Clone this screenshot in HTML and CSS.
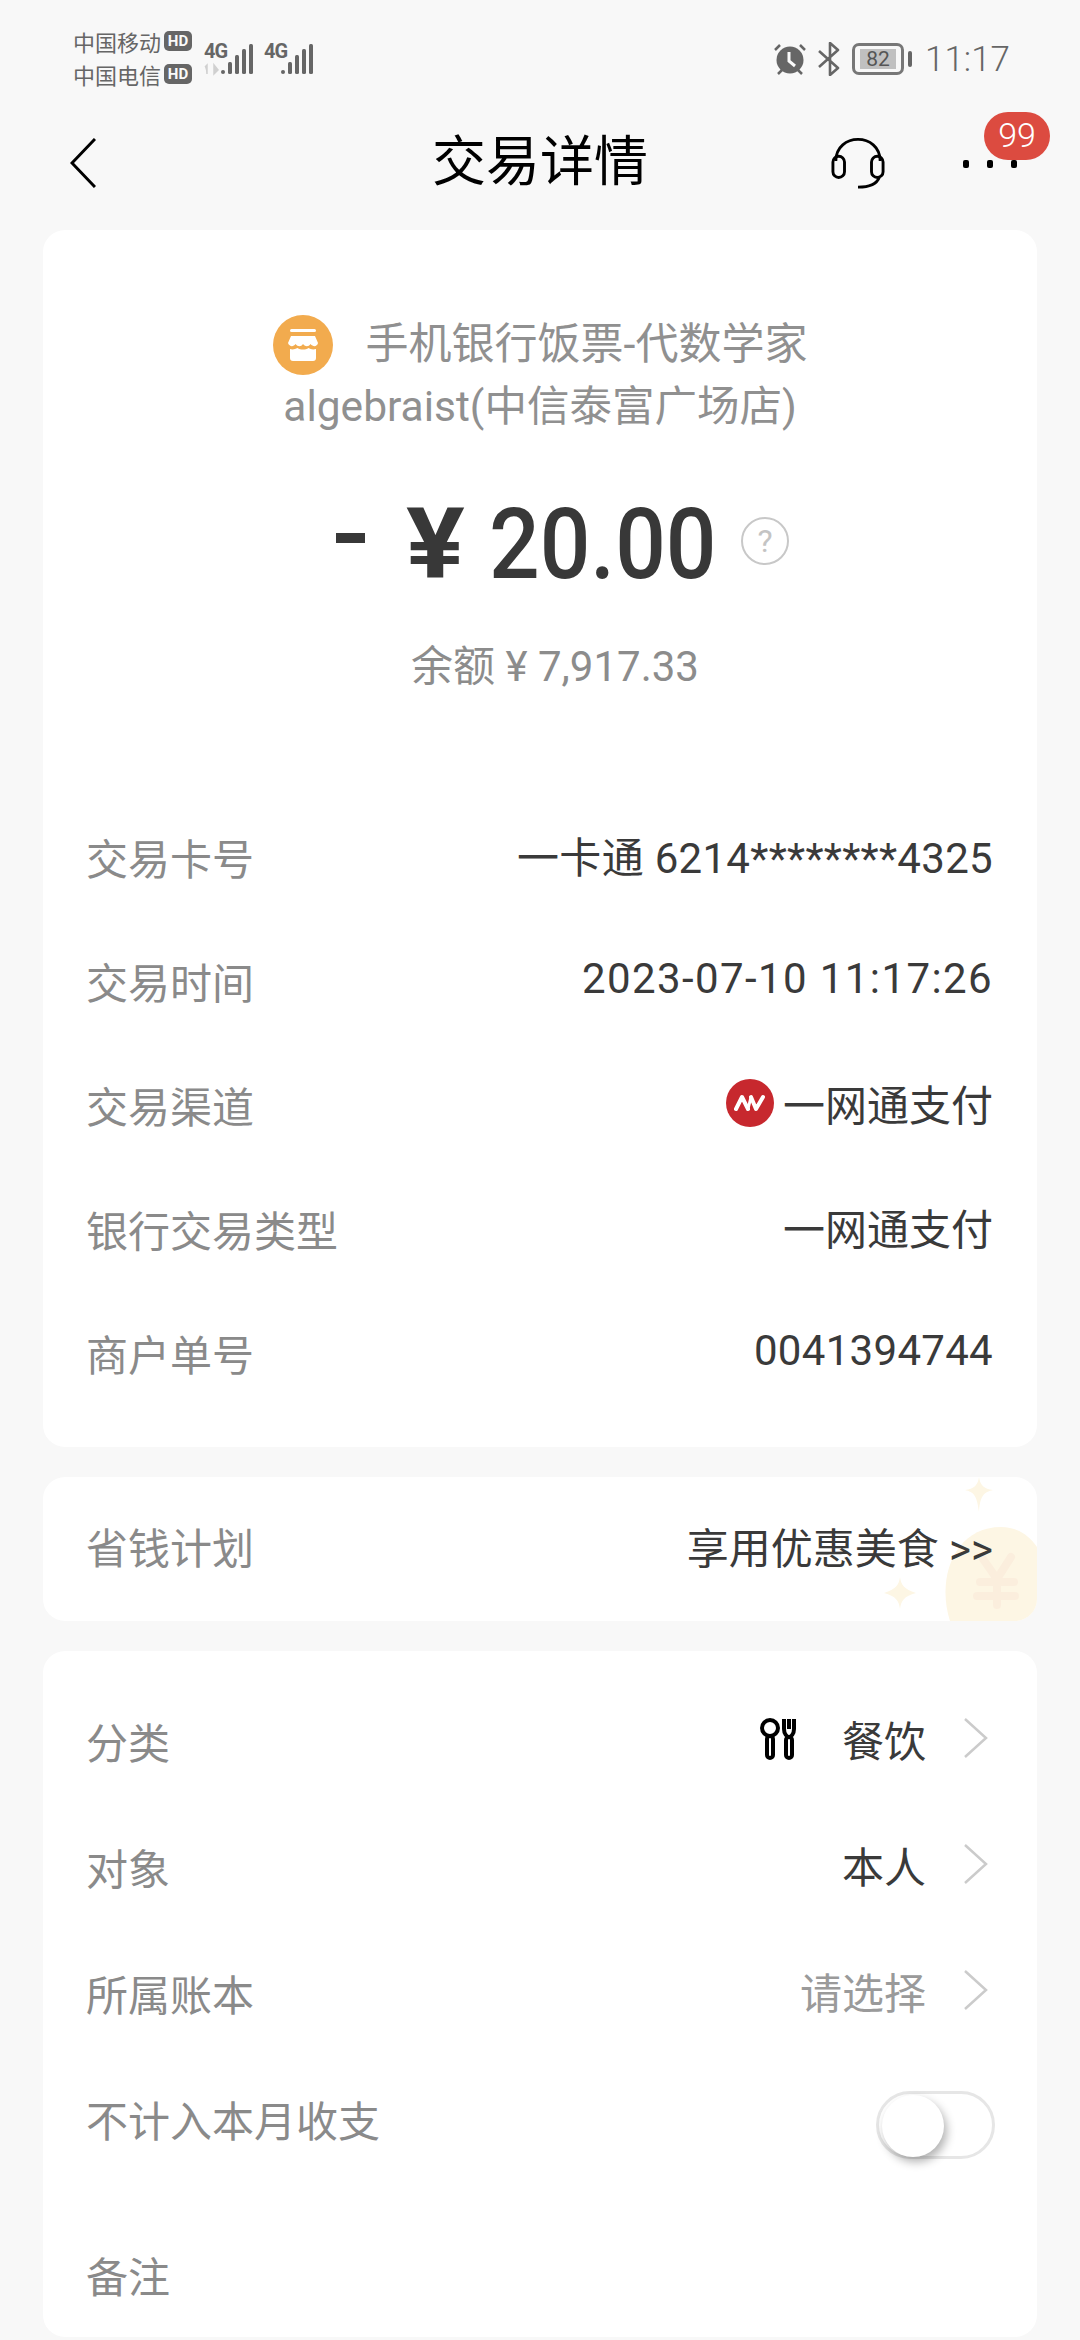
FILE: index.html
```html
<!DOCTYPE html>
<html lang="zh-CN">
<head>
  <meta charset="UTF-8">
  <meta name="viewport" content="width=device-width, initial-scale=1.0">
  <title>交易详情</title>
  <link rel="stylesheet" href="styles.css">
</head>
<body>
  <!-- Status bar -->
  <div class="status-bar">
    <div class="carriers">
      <div class="carrier">中国移动<span class="hd">HD</span></div>
      <div class="carrier">中国电信<span class="hd">HD</span></div>
    </div>
    <svg class="signal" width="110" height="44" viewBox="0 -10 110 44">
      <text class="net" x="0" y="15">4G</text>
      <path d="M3 22v9M1 24l2-2v9M10 22l4 5-4 4z" fill="#d0d0d0" stroke="#d0d0d0" stroke-width="1.5"/>
      <g fill="#666">
        <rect x="17" y="27" width="4" height="4" rx="2"/>
        <rect x="24" y="19" width="4" height="12" rx="1.5"/>
        <rect x="31" y="12" width="4" height="19" rx="1.5"/>
        <rect x="38" y="6" width="4" height="25" rx="1.5"/>
        <rect x="45" y="1" width="4" height="30" rx="1.5"/>
      </g>
      <text class="net" x="60" y="15">4G</text>
      <g fill="#666">
        <rect x="77" y="27" width="4" height="4" rx="2"/>
        <rect x="84" y="19" width="4" height="12" rx="1.5"/>
        <rect x="91" y="12" width="4" height="19" rx="1.5"/>
        <rect x="98" y="6" width="4" height="25" rx="1.5"/>
        <rect x="105" y="1" width="4" height="30" rx="1.5"/>
      </g>
    </svg>
    <div class="status-right">
      <svg width="34" height="32" viewBox="0 0 34 32">
        <circle cx="17" cy="17" r="13.5" fill="#666"/>
        <path d="M16 9v9l6 5" fill="none" stroke="#fafafa" stroke-width="3"/>
        <path d="M2 7l5-5M27 2l5 5M5 31l4-4M29 31l-4-4" stroke="#666" stroke-width="2.5"/>
      </svg>
      <svg class="bt" width="22" height="34" viewBox="0 0 22 34">
        <path d="M1 9l19 17-8 7V1l8 7L1 25" fill="none" stroke="#666" stroke-width="2.6" stroke-linejoin="round"/>
      </svg>
      <div class="battery"><span class="battery-num">82</span></div>
      <span class="battery-tip"></span>
      <span class="clock">11:17</span>
    </div>
  </div>

  <!-- Nav -->
  <div class="nav">
    <svg class="back" width="26" height="50" viewBox="0 0 26 50">
      <path d="M25 1L2 25l23 24" fill="none" stroke="#000" stroke-width="3"/>
    </svg>
    <div class="nav-title">交易详情</div>
    <svg class="headset" width="56" height="56" viewBox="0 0 56 56">
      <g fill="none" stroke="#000" stroke-width="3">
        <path d="M5 26C5 -4 51 -4 51 26"/>
        <rect x="2" y="21" width="12" height="22" rx="6"/>
        <rect x="42" y="21" width="12" height="22" rx="6"/>
        <path d="M50 43c-3 8-11 10-22 10"/>
      </g>
    </svg>
    <div class="more">
      <span class="dot"></span><span class="dot"></span><span class="dot"></span>
      <span class="badge">99</span>
    </div>
  </div>

  <!-- Summary -->
  <div class="card summary">
    <div class="merchant">
      <svg class="shop" width="60" height="60" viewBox="0 0 60 60">
        <circle cx="30" cy="30" r="30" fill="#f2ab4e"/>
        <rect x="17" y="14" width="26" height="3" rx="1.5" fill="#fff"/>
        <path d="M18 21h24l3 7c-1 4-5 4-7.500 1-2 3-5 3-7.500 0-2 3-5 3-7.500 0-2 3-6 3-7.500-1z" fill="#fff"/>
        <path d="M17 34c3 1 5 0 7.500-1 3 2 8 2 11 0 2 1 4 2 7.500 1v9c0 2-1 3-3 3H20c-2 0-3-1-3-3z" fill="#fff"/>
      </svg><span class="merchant-name">手机银行饭票-代数学家</span><br>algebraist(中信泰富广场店)
    </div>
    <div class="amount">
      <span class="minus"></span>
      <span class="yen">¥</span>
      <span class="amount-num">20.00</span>
      <span class="help">?</span>
    </div>
    <div class="balance">余额 ¥ 7,917.33</div>

    <div class="rows">
      <div class="row"><span class="label">交易卡号</span><span class="value num">一卡通 6214********4325</span></div>
      <div class="row"><span class="label">交易时间</span><span class="value date">2023-07-10 11:17:26</span></div>
      <div class="row">
        <span class="label">交易渠道</span>
        <span class="value with-icon">
          <svg width="48" height="48" viewBox="0 0 48 48">
            <circle cx="24" cy="24" r="24" fill="#c7282e"/>
            <path d="M10 30l6-12 6 12M25 18l5 12 7-12" fill="none" stroke="#fff" stroke-width="4" stroke-linecap="round" stroke-linejoin="round"/>
            <path d="M22 30l3-12" fill="none" stroke="#fff" stroke-width="3"/>
          </svg>一网通支付
        </span>
      </div>
      <div class="row"><span class="label">银行交易类型</span><span class="value">一网通支付</span></div>
      <div class="row"><span class="label">商户单号</span><span class="value num">0041394744</span></div>
    </div>
  </div>

  <!-- Promo -->
  <div class="card promo">
    <svg class="promo-art" width="120" height="144" viewBox="0 0 120 144">
      <path d="M62 0c1 8 5 12 14 13-9 2-13 6-14 22-2-16-5-20-14-22 9-1 13-5 14-13z" fill="#fdf6e4"/>
      <path d="M-17 100c1 8 4 12 16 16-12 3-15 8-16 16-1-8-4-13-16-16 12-4 15-8 16-16z" fill="#fdf6e4"/>
      <path d="M33 144C19 100 38 50 84 50c16 0 28 8 36 20v74z" fill="#fdf6e4"/>
      <g fill="none" stroke="#fbeedd" stroke-width="8" stroke-linecap="round">
        <path d="M66 82l14 20 14-22M80 102v26M63 105h34M60 119h38"/>
      </g>
    </svg>
    <span class="label">省钱计划</span><span class="value">享用优惠美食 &gt;&gt;</span>
  </div>

  <!-- Details -->
  <div class="card details">
    <div class="row">
      <span class="label">分类</span>
      <span class="value food">
        <svg width="38" height="42" viewBox="0 0 38 42">
          <g fill="none" stroke="#000" stroke-width="4">
            <circle cx="10" cy="10" r="8"/>
            <rect x="7" y="18" width="6" height="22" rx="3"/>
            <path d="M24 1v10c0 5 3 8 5 8s5-3 5-8V1M29 1v10"/>
            <rect x="26" y="19" width="6" height="21" rx="3"/>
          </g>
        </svg>
        <span>餐饮</span>
      </span>
      <svg class="chevron" width="24" height="40" viewBox="0 0 24 40"><path d="M1 1l21 19L1 39" fill="none" stroke="#cbcbcb" stroke-width="2.5"/></svg>
    </div>
    <div class="row">
      <span class="label">对象</span>
      <span class="value">本人</span>
      <svg class="chevron" width="24" height="40" viewBox="0 0 24 40"><path d="M1 1l21 19L1 39" fill="none" stroke="#cbcbcb" stroke-width="2.5"/></svg>
    </div>
    <div class="row">
      <span class="label">所属账本</span>
      <span class="value muted">请选择</span>
      <svg class="chevron" width="24" height="40" viewBox="0 0 24 40"><path d="M1 1l21 19L1 39" fill="none" stroke="#cbcbcb" stroke-width="2.5"/></svg>
    </div>
    <div class="row">
      <span class="label">不计入本月收支</span>
      <div class="toggle"><span class="knob"></span></div>
    </div>
    <div class="row note"><span class="label">备注</span></div>
  </div>
</body>
</html>
```

FILE: styles.css
```css
* { box-sizing: border-box; }
html, body { margin: 0; height: 2340px; overflow: hidden; }
body { background: #f8f8f8; color: #3a3a3a; font-family: Roboto, "Noto Sans CJK SC", sans-serif; font-size: 42px; }

.status-bar { height: 113px; padding: 24px 70px 0 73px; display: flex; align-items: flex-start; color: #666; }
.carriers { width: 131px; font-size: 22px; }
.carrier { display: flex; align-items: center; height: 33px; white-space: nowrap; }
.hd { margin-left: 3px; width: 28px; height: 20px; background: #666; color: #fafafa; border-radius: 5px; font-size: 15px; font-weight: 700; line-height: 20px; text-align: center; }
.signal { margin-top: 9px; }
.net { font-family: "Liberation Sans Narrow", Roboto, sans-serif; font-size: 20px; font-weight: 700; letter-spacing: -1px; fill: #666; }
.status-right { margin-left: auto; display: flex; align-items: center; height: 34px; margin-top: 18px; }
.bt { margin-left: 11px; }
.battery { margin-left: 12px; width: 52px; height: 32px; border: 3px solid #777; border-radius: 7px; padding: 3px 5px; }
.battery-num { display: block; background: #c0c0c0; color: #555; font-size: 21px; line-height: 20px; height: 20px; text-align: center; }
.battery-tip { margin-left: 4px; width: 4px; height: 16px; background: #666; border-radius: 2px; }
.clock { margin-left: 13px; font-size: 35px; font-weight: 300; }

.nav { height: 100px; padding-left: 70px; position: relative; display: flex; align-items: center; }
.nav-title { position: absolute; left: 0; right: 0; text-align: center; font-size: 54px; color: #000; line-height: 102px; }
.headset { position: absolute; left: 831px; top: 22px; width: 54px; }
.more { position: absolute; left: 963px; top: 47px; display: flex; gap: 18px; }
.dot { width: 6px; height: 8px; background: #000; border-radius: 2px; }
.badge { position: absolute; left: 21px; top: -48px; width: 66px; height: 48px; background: #dc4b40; border-radius: 24px; color: #fff; font-size: 34px; font-weight: 300; line-height: 46px; text-align: center; }

.card { margin: 0 43px; background: #fff; border-radius: 22px; }
.summary { margin-top: 17px; padding-top: 83px; height: 1217px; }
.merchant { text-align: center; color: #909090; line-height: 62px; font-size: 42.5px; }
.merchant-name { font-size: 43px; }
.shop { vertical-align: middle; margin-right: 33px; margin-top: -6px; }
.amount { margin-top: 57px; height: 100px; display: flex; align-items: center; position: relative; }
.minus { margin-left: 293px; width: 29px; height: 10px; background: #383838; margin-top: -14px; }
.yen { margin-left: 41px; font-size: 98px; font-weight: 700; color: #383838; line-height: 100px; display: inline-block; transform: scaleX(1.12); transform-origin: left center; }
.amount-num { margin-left: 30px; font-size: 98px; font-weight: 500; color: #383838; line-height: 100px; display: inline-block; transform: scaleX(.91); transform-origin: left center; }
.help { position: absolute; left: 698px; top: 22px; width: 48px; height: 48px; border: 2px solid #c8c8c8; border-radius: 50%; color: #c4c4c4; font-size: 32px; line-height: 44px; text-align: center; }
.balance { margin-top: 42px; padding-left: 30px; line-height: 60px; text-align: center; color: #8c8c8c; font-size: 42px; }

.rows { margin-top: 97px; }
.row { height: 124px; padding: 0 44px 0 43px; display: flex; align-items: center; justify-content: space-between; }
.label { color: #8a8a8a; }
.value { margin-left: auto; margin-top: -3px; white-space: nowrap; }
.num { letter-spacing: .3px; }
.date { letter-spacing: 1.4px; }
.with-icon { display: flex; align-items: center; gap: 9px; }

.promo { margin-top: 30px; height: 144px; padding: 0 44px 8px 43px; display: flex; align-items: center; position: relative; overflow: hidden; }
.promo-art { position: absolute; right: 0; top: 0; overflow: visible; }
.promo .value { position: relative; margin-top: 0; }
.promo .label { position: relative; }

.details { margin-top: 30px; padding-top: 26px; height: 686px; }
.details .row { height: 126px; padding-right: 49px; }
.food { display: flex; align-items: center; gap: 44px; }
.chevron { margin-left: 38px; margin-top: -4px; }
.muted { color: #9a9a9a; }
.toggle { margin-left: auto; width: 119px; height: 68px; margin-top: 14px; border: 3px solid #e6e6e6; border-radius: 34px; margin-right: -7px; position: relative; }
.knob { position: absolute; left: 3px; top: 1px; width: 62px; height: 62px; background: #fff; border-radius: 50%; box-shadow: 3px 5px 10px rgba(0, 0, 0, .3); }
.note { margin-top: 30px; }
```
